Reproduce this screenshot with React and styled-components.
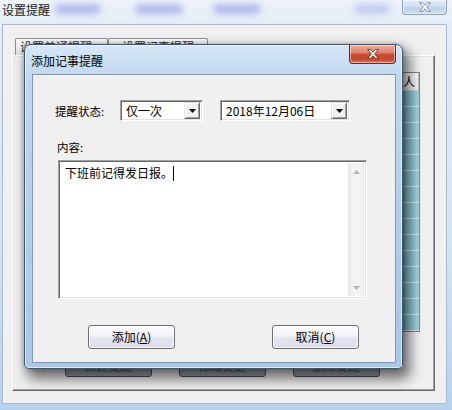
import React from 'react';
import styled, { createGlobalStyle } from 'styled-components';

const Global = createGlobalStyle`
  *, *::before, *::after { box-sizing: border-box; }
  html, body { margin: 0; padding: 0; }
  body {
    width: 452px; height: 410px; overflow: hidden;
    font-family: "Noto Sans CJK SC", "Microsoft YaHei", sans-serif;
    font-size: 12px; color: #000;
  }
`;

const Screen = styled.div`
  position: relative;
  width: 452px;
  height: 410px;
  overflow: hidden;
  display: flex;
  flex-direction: column;
  background: linear-gradient(180deg, #eef3fa 0%, #e3ecf6 6%, #d4e3f2 60%, #b9d1ec 100%);
`;

const TitleBar = styled.div`
  height: 24px;
  flex: none;
  display: flex;
  align-items: flex-start;
  padding-left: 2px;
`;

const BgTitle = styled.span`
  margin-top: 3px;
  font-size: 12px;
  line-height: 14px;
  color: #1a1a1a;
`;

const Blob = styled.span`
  display: block;
  margin-top: 4px;
  margin-left: ${p => p.$ml}px;
  width: ${p => p.$w}px;
  height: 10px;
  border-radius: 5px;
  background: ${p => p.$c || 'rgba(120, 135, 225, 0.5)'};
  filter: blur(3px);
`;

const CloseBtn = styled.div`
  flex: none;
  display: flex;
  align-items: center;
  justify-content: center;
  margin-left: ${p => (p.$auto ? 'auto' : '0')};
  margin-right: ${p => p.$mr}px;
  width: ${p => p.$w}px;
  height: ${p => p.$h}px;
  border: 1px solid ${p => (p.$red ? '#7b2418' : '#8ea3c0')};
  border-top: none;
  border-radius: 0 0 4px 4px;
  background: ${p =>
    p.$red
      ? 'linear-gradient(180deg, #e9aa9c 0%, #dc8a78 40%, #c8472f 55%, #c44a34 80%, #d77a5f 100%)'
      : 'linear-gradient(180deg, #e4edf8 0%, #cddcef 50%, #bfd2ea 55%, #cfdff2 100%)'};
  box-shadow: inset 0 0 0 1px rgba(255, 255, 255, 0.45);
`;

const XIcon = ({ dark }) => (
  <svg width="12" height="10" viewBox="0 0 12 10">
    <path
      d="M0.6 0.6H3.6L6 3.3L8.4 0.6H11.4L7.6 5L11.4 9.4H8.4L6 6.7L3.6 9.4H0.6L4.4 5Z"
      fill="#fff"
      stroke={dark ? '#5a1c12' : '#6a7c96'}
      strokeWidth="0.8"
      strokeLinejoin="round"
    />
  </svg>
);

const BgClient = styled.div`
  flex: 1;
  margin: 0 5px 6px 2px;
  border: 1px solid #a9bbd0;
  background: #f0f0f0;
  padding: 13px 11px 12px 9px;
  display: flex;
  flex-direction: column;
`;

const TabStrip = styled.div`
  height: 17px;
  flex: none;
  display: flex;
  padding-left: 3px;
`;

const Tab = styled.div`
  width: ${p => p.$w}px;
  height: 17px;
  border: 1px solid #8b8f98;
  border-bottom: none;
  border-radius: 2px 2px 0 0;
  background: linear-gradient(180deg, #fbfbfb 0%, #ececec 50%, #e0e0e0 100%);
  font-size: 12px;
  line-height: 15px;
  padding-left: ${p => p.$pl}px;
  color: #333;
  white-space: nowrap;
  overflow: hidden;
`;

const Panel = styled.div`
  flex: 1;
  border: 1px solid;
  border-color: #ffffff #696969 #696969 #ffffff;
  box-shadow: inset -1px -1px 0 #a0a0a0, inset 1px 1px 0 #e3e3e3;
  background: #f0f0f0;
  padding: 16px 14px 0 12px;
  display: flex;
  flex-direction: column;
`;

const ListView = styled.div`
  height: 260px;
  flex: none;
  margin-left: 10px;
  border: 1px solid #828790;
  background: #fff;
  display: flex;
  flex-direction: column;
`;

const ListHeader = styled.div`
  height: 18px;
  flex: none;
  display: flex;
  background: linear-gradient(180deg, #ffffff 0%, #f4f4f4 100%);
  border-bottom: 1px solid #d5d5d5;
`;

const HeaderCell = styled.div`
  flex: ${p => (p.$grow ? 1 : 'none')};
  width: ${p => p.$w}px;
  border-right: 1px solid #bfbfbf;
  border-left: ${p => (p.$last ? '1px solid #9a9a9a' : 'none')};
  font-size: 12px;
  line-height: 17px;
  text-align: ${p => (p.$right ? 'right' : 'left')};
  padding: 0 3px;
  white-space: nowrap;
  overflow: hidden;
`;

const ListBody = styled.div`
  flex: 1;
  display: flex;
`;

const BodyFill = styled.div`
  flex: 1;
`;

const TealColumn = styled.div`
  width: 26px;
  background:
    repeating-linear-gradient(180deg, transparent 0px, transparent 15px, rgba(220, 245, 250, 0.9) 15px, rgba(220, 245, 250, 0.9) 16px),
    linear-gradient(90deg, #3f8898 0%, #5aa2b2 30%, #8ecad7 55%, #a2d5e0 100%);
`;

const BgButtonRow = styled.div`
  display: flex;
  margin-top: 22px;
  padding-left: 40px;
`;

const BgButton = styled.div`
  width: 87px;
  height: 23px;
  margin-left: ${p => p.$ml}px;
  border: 1px solid #4a4f58;
  border-radius: 3px;
  background: linear-gradient(180deg, #c4c7cc 0%, #b4b8bf 50%, #a3a8b0 51%, #9aa0a8 100%);
  font-size: 12px;
  line-height: 21px;
  text-align: center;
  color: #555;
`;

const Dialog = styled.div`
  position: absolute;
  left: 24px;
  top: 44px;
  width: 379px;
  height: 325px;
  border: 1px solid #3d5674;
  border-radius: 7px 7px 5px 5px;
  background: linear-gradient(180deg, #d6e6f6 0%, #c1d7ee 10%, #b4cde8 55%, #abc7e6 100%);
  box-shadow:
    inset 0 0 0 1px rgba(255, 255, 255, 0.6),
    0 0 5px rgba(0, 0, 0, 0.25),
    5px 8px 13px 2px rgba(0, 0, 0, 0.55);
  display: flex;
  flex-direction: column;
`;

const DlgTitleBar = styled.div`
  height: 29px;
  flex: none;
  display: flex;
  align-items: flex-start;
  padding-left: 6px;
`;

const DlgTitle = styled.span`
  margin-top: 9px;
  font-size: 12px;
  line-height: 14px;
  color: #000;
`;

const DlgClient = styled.div`
  flex: 1;
  margin: 0 6px 5px 7px;
  border: 1px solid #8198b4;
  background: #f0f0f0;
  padding: 25px 0 0 22px;
  display: flex;
  flex-direction: column;
`;

const FormRow = styled.div`
  display: flex;
  align-items: center;
  height: 21px;
`;

const Label = styled.div`
  width: ${p => (p.$w ? `${p.$w}px` : 'auto')};
  margin-left: ${p => p.$ml || 0}px;
  margin-top: ${p => p.$mt || 0}px;
  font-size: 11.5px;
  line-height: 14px;
  white-space: nowrap;
`;

const Sunken = styled.div`
  border: 1px solid;
  border-color: #a0a0a0 #ffffff #ffffff #a0a0a0;
  box-shadow: inset 1px 1px 0 #696969, inset -1px -1px 0 #e3e3e3;
  background: #fff;
`;

const Combo = styled(Sunken)`
  width: ${p => p.$w}px;
  height: 21px;
  margin-left: ${p => p.$ml || 0}px;
  display: flex;
  align-items: center;
  padding: 2px 2px 2px 5px;
  font-size: 12px;
  line-height: 15px;
`;

const ComboText = styled.span`
  flex: 1;
  white-space: nowrap;
`;

const DropBtn = styled.div`
  width: 16px;
  height: 17px;
  flex: none;
  display: flex;
  align-items: center;
  justify-content: center;
  border: 1px solid;
  border-color: #e3e3e3 #696969 #696969 #e3e3e3;
  box-shadow: inset 1px 1px 0 #fff, inset -1px -1px 0 #a0a0a0;
  background: #f0f0f0;
`;

const DownArrow = ({ color = '#000' }) => (
  <svg width="7" height="4" viewBox="0 0 7 4">
    <path d="M0 0H7L3.5 4Z" fill={color} />
  </svg>
);

const UpArrow = ({ color = '#000' }) => (
  <svg width="7" height="4" viewBox="0 0 7 4">
    <path d="M0 4H7L3.5 0Z" fill={color} />
  </svg>
);

const Memo = styled(Sunken)`
  width: 309px;
  height: 139px;
  margin-top: 6px;
  margin-left: 3px;
  display: flex;
  padding: 2px;
`;

const MemoText = styled.div`
  flex: 1;
  padding: 2px 0 0 4px;
  font-size: 12px;
  line-height: 16px;
  white-space: nowrap;
`;

const Caret = styled.span`
  display: inline-block;
  width: 1px;
  height: 15px;
  vertical-align: -3px;
  background: #000;
`;

const ScrollBar = styled.div`
  width: 17px;
  flex: none;
  display: flex;
  flex-direction: column;
  justify-content: space-between;
  background: linear-gradient(90deg, #e6e6e6 0%, #f3f3f3 30%, #f3f3f3 80%, #e8e8e8 100%);
  border-left: 1px solid #fafafa;
`;

const ScrollArrow = styled.div`
  height: 17px;
  display: flex;
  align-items: center;
  justify-content: center;
`;

const ButtonRow = styled.div`
  display: flex;
  margin-top: 26px;
`;

const Button = styled.div`
  width: 87px;
  height: 24px;
  margin-left: ${p => p.$ml}px;
  border: 1px solid #707070;
  border-radius: 3px;
  background: linear-gradient(180deg, #fdfdff 0%, #f1f1f8 45%, #e4e4f0 55%, #dcdcec 100%);
  box-shadow: inset 0 0 0 1px rgba(255, 255, 255, 0.8);
  font-size: 12px;
  line-height: 22px;
  text-align: center;
  color: #000;
`;

const Key = styled.span`
  text-decoration: underline;
  text-underline-offset: 1px;
`;

export default function App() {
  return (
    <>
      <Global />
      <Screen>
        <TitleBar>
          <BgTitle>设置提醒</BgTitle>
          <Blob $ml={5} $w={46} />
          <Blob $ml={34} $w={48} />
          <Blob $ml={30} $w={48} />
          <Blob $ml={93} $w={36} $c="rgba(140, 165, 225, 0.45)" />
          <CloseBtn $auto $mr={5} $w={45} $h={15}>
            <XIcon />
          </CloseBtn>
        </TitleBar>
        <BgClient>
          <TabStrip>
            <Tab $w={93} $pl={4}>设置普通提醒</Tab>
            <Tab $w={100} $pl={13}>设置记事提醒</Tab>
          </TabStrip>
          <Panel>
            <ListView>
              <ListHeader>
                <HeaderCell $w={120}>提醒时间</HeaderCell>
                <HeaderCell $grow>内容</HeaderCell>
                <HeaderCell $w={60} $right $last>联系人</HeaderCell>
              </ListHeader>
              <ListBody>
                <BodyFill />
                <TealColumn />
              </ListBody>
            </ListView>
            <BgButtonRow>
              <BgButton $ml={0}>新建提醒</BgButton>
              <BgButton $ml={27}>修改提醒</BgButton>
              <BgButton $ml={27}>删除提醒</BgButton>
            </BgButtonRow>
          </Panel>
        </BgClient>

        <Dialog>
          <DlgTitleBar>
            <DlgTitle>添加记事提醒</DlgTitle>
            <CloseBtn $auto $red $mr={6} $w={47} $h={19}>
              <XIcon dark />
            </CloseBtn>
          </DlgTitleBar>
          <DlgClient>
            <FormRow>
              <Label $w={65}>提醒状态:</Label>
              <Combo $w={83}>
                <ComboText>仅一次</ComboText>
                <DropBtn>
                  <DownArrow />
                </DropBtn>
              </Combo>
              <Combo $w={130} $ml={17}>
                <ComboText>2018年12月06日</ComboText>
                <DropBtn>
                  <DownArrow />
                </DropBtn>
              </Combo>
            </FormRow>
            <Label $ml={2} $mt={19}>内容:</Label>
            <Memo>
              <MemoText>
                下班前记得发日报。<Caret />
              </MemoText>
              <ScrollBar>
                <ScrollArrow>
                  <UpArrow color="#b4b4b4" />
                </ScrollArrow>
                <ScrollArrow>
                  <DownArrow color="#b4b4b4" />
                </ScrollArrow>
              </ScrollBar>
            </Memo>
            <ButtonRow>
              <Button $ml={33}>
                添加(<Key>A</Key>)
              </Button>
              <Button $ml={97}>
                取消(<Key>C</Key>)
              </Button>
            </ButtonRow>
          </DlgClient>
        </Dialog>
      </Screen>
    </>
  );
}
